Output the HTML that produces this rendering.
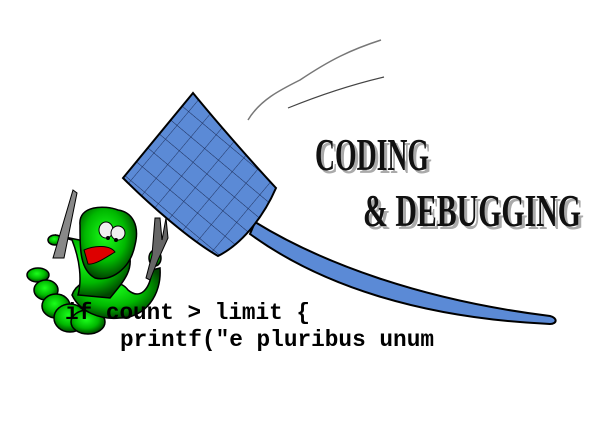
<!DOCTYPE html>
<html><head><style>
html,body{margin:0;padding:0;background:#fff;}
svg{display:block;}
</style></head><body>
<svg width="600" height="434" viewBox="0 0 600 434" xmlns="http://www.w3.org/2000/svg">
<defs>
<radialGradient id="g" cx="0.45" cy="0.4" r="0.6"><stop offset="0" stop-color="#1bff1b"/><stop offset="0.6" stop-color="#00b800"/><stop offset="1" stop-color="#004400"/></radialGradient>
<pattern id="net" width="18" height="18" patternUnits="userSpaceOnUse" patternTransform="rotate(40)"><rect width="18" height="18" fill="#5b8ad6"/><path d="M0 0H18M0 0V18" stroke="#1a2a55" stroke-width="0.9"/></pattern>
</defs>
<path d="M248 120 C260 100 280 90 300 80 C330 60 350 50 381 40" fill="none" stroke="#777" stroke-width="1.5"/>
<path d="M288 108 C320 95 350 85 384 77" fill="none" stroke="#444" stroke-width="1.2"/>
<path d="M255 222 C320 262 420 300 550 316 C558 318 557 324 550 324 C420 318 320 285 250 234 Z" fill="#5b8ad6" stroke="#000" stroke-width="2"/>
<path d="M193 93 L123 178 C150 205 190 240 218 256 C240 245 262 220 276 188 C250 160 215 120 193 93 Z" fill="url(#net)" stroke="#000" stroke-width="2"/>
<g stroke="#000" stroke-width="1.5" fill="url(#g)">
<ellipse cx="38" cy="275" rx="11" ry="7"/>
<ellipse cx="46" cy="290" rx="12" ry="10"/>
<ellipse cx="56" cy="306" rx="14" ry="12"/>
<ellipse cx="70" cy="318" rx="16" ry="14"/>
<ellipse cx="88" cy="322" rx="17" ry="12"/>
<path d="M72 295 C80 272 120 278 128 290 C140 300 150 290 152 270 L160 268 C162 295 145 318 120 318 C100 320 80 312 72 295 Z"/>
<path d="M55 235 L72 240 C80 260 82 280 78 295 L110 298 C125 280 135 268 128 250 Z"/>
<path d="M80 225 C78 205 105 205 118 210 C132 212 140 225 135 245 C130 270 110 282 95 278 C80 270 80 250 80 225 Z"/>
<ellipse cx="55" cy="240" rx="7" ry="5"/>
<ellipse cx="155" cy="258" rx="6" ry="8"/>
</g>
<path d="M73 190 L77 193 L64 258 L53 258 Z" fill="#888" stroke="#000" stroke-width="1"/>
<path d="M155 218 L160 218 L162 240 L166 218 L168 238 L158 260 L150 280 L146 278 L152 255 Z" fill="#666" stroke="#000" stroke-width="1"/>
<ellipse cx="106" cy="230" rx="7" ry="8" fill="#eee" stroke="#000"/>
<ellipse cx="118" cy="233" rx="7" ry="7" fill="#eee" stroke="#000"/>
<circle cx="108" cy="238" r="2" fill="#000"/><circle cx="116" cy="240" r="2" fill="#000"/>
<path d="M84 250 C95 245 110 245 115 252 C105 258 95 265 88 264 Z" fill="#d00" stroke="#000"/>
<g font-family="Liberation Serif, serif" font-weight="bold" font-size="46">
<text x="318" y="173" fill="#aaa" textLength="114" lengthAdjust="spacingAndGlyphs">CODING</text>
<text x="315" y="170" fill="#111" textLength="114" lengthAdjust="spacingAndGlyphs">CODING</text>
<text x="366" y="229" fill="#aaa" textLength="218" lengthAdjust="spacingAndGlyphs">&amp; DEBUGGING</text>
<text x="363" y="226" fill="#111" textLength="218" lengthAdjust="spacingAndGlyphs">&amp; DEBUGGING</text>
</g>
<g font-family="Liberation Mono, monospace" font-weight="bold" font-size="23" fill="#000">
<text x="65" y="319" textLength="245" lengthAdjust="spacingAndGlyphs">if count &gt; limit {</text>
<text x="120" y="346" textLength="314" lengthAdjust="spacingAndGlyphs">printf("e pluribus unum</text>
</g>
</svg>
</body></html>
